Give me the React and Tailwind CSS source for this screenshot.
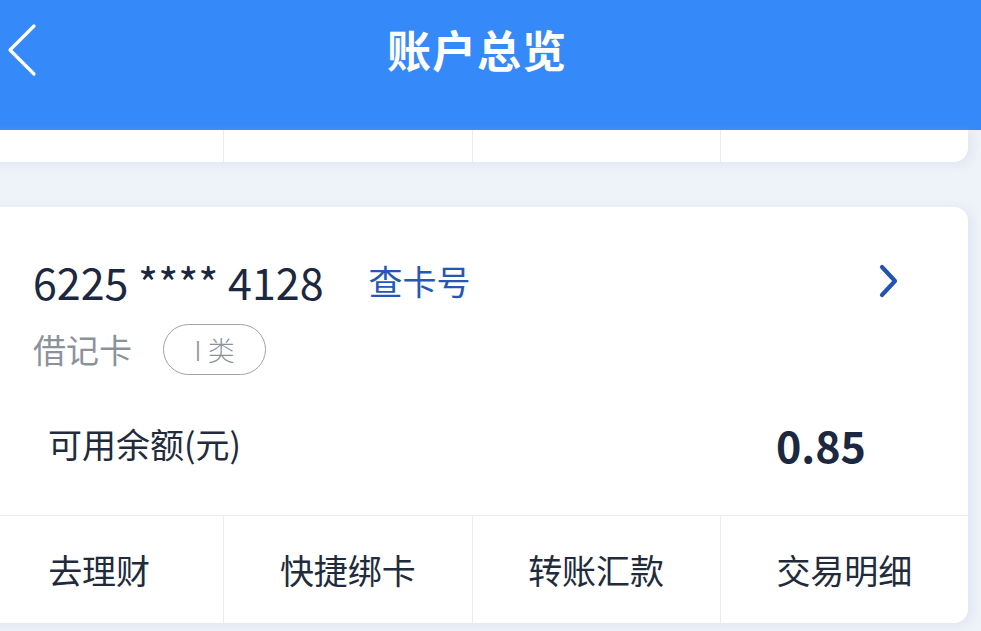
import React from 'react';

const FONT = { fontFamily: '"Noto Sans CJK SC", "Noto Sans", sans-serif' };

const ACTIONS = ['去理财', '快捷绑卡', '转账汇款', '交易明细'];

function BackIcon() {
  return (
    <svg width="40" height="56" viewBox="0 0 40 56" className="text-white">
      <path d="M28 4 L4 28 L28 52" fill="none" stroke="currentColor" strokeWidth="3.2" strokeLinecap="round" strokeLinejoin="round" />
    </svg>
  );
}

function ArrowRight() {
  return (
    <svg width="22" height="34" viewBox="0 0 22 34">
      <path d="M4 3 L17 17 L4 31" fill="none" stroke="#2353b0" strokeWidth="4.2" strokeLinecap="round" strokeLinejoin="round" />
    </svg>
  );
}

export default function App() {
  return (
    <div className="w-[981px] h-[631px] overflow-hidden bg-[#eef2f9]" style={FONT}>
      <header className="h-[130px] bg-[#3689f8] flex items-start pt-[22px] pl-[6px]">
        <BackIcon />
        <h1 className="ml-[341px] text-[44px] leading-[54px] font-bold text-white tracking-[1px]">
          账户总览
        </h1>
      </header>

      <div className="-ml-[25px] w-[993px] h-[32px] bg-white rounded-b-[14px] grid grid-cols-4 shadow-[4px_2px_10px_rgba(180,195,225,0.25)]">
        <div />
        <div className="border-l border-[#ececec]" />
        <div className="border-l border-[#ececec]" />
        <div className="border-l border-[#ececec]" />
      </div>

      <div className="-ml-[25px] mt-[45px] w-[993px] h-[416px] bg-white rounded-[14px] flex flex-col shadow-[4px_2px_10px_rgba(180,195,225,0.25)]">
        <div className="h-[308px] pl-[58px] pr-[68px] pt-[49px] flex flex-col">
          <div className="h-[50px] flex items-center">
            <span className="text-[43px] leading-none text-[#1c2840]">6225 **** 4128</span>
            <span className="ml-[45px] text-[34px] leading-none text-[#2458b3]">查卡号</span>
            <span className="ml-auto flex">
              <ArrowRight />
            </span>
          </div>
          <div className="mt-[18px] h-[51px] flex items-center">
            <span className="text-[33px] leading-none text-[#8c929b]">借记卡</span>
            <span className="ml-[31px] w-[103px] h-[51px] rounded-full border border-[#9ea3aa] flex items-center justify-center gap-[6px] text-[27px] leading-none font-light text-[#8c929b]">
              <span>I</span>
              <span>类</span>
            </span>
          </div>
          <div className="mt-[44px] h-[50px] flex items-center pl-[15px] pr-[34px]">
            <span className="text-[34px] leading-none text-[#222b3b]">可用余额(元)</span>
            <span className="ml-auto text-[43px] leading-none font-bold text-[#1c2840]">0.85</span>
          </div>
        </div>
        <div className="flex-1 border-t border-[#ececec] grid grid-cols-4">
          {ACTIONS.map((label, i) => (
            <div
              key={label}
              className={`flex items-center justify-center text-[34px] leading-none text-[#222b3b] ${i > 0 ? 'border-l border-[#ececec]' : ''}`}
            >
              {label}
            </div>
          ))}
        </div>
      </div>
    </div>
  );
}
